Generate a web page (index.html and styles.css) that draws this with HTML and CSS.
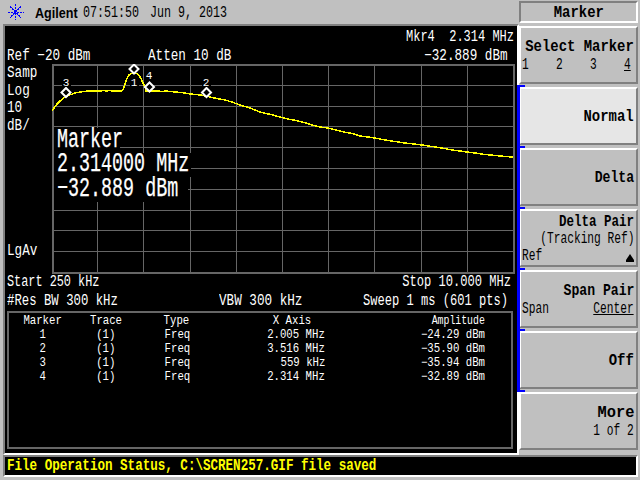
FILE: index.html
```html
<!DOCTYPE html>
<html lang="en">
<head>
<meta charset="utf-8">
<title>Agilent Marker</title>
<link rel="stylesheet" href="styles.css">
</head>
<body>
<div class="app">
  <div class="left">
    <header class="topbar">
      <svg class="logo" viewBox="0 0 24 24" width="24" height="24" aria-hidden="true">
        <g stroke="#0000ff" stroke-width="1" stroke-dasharray="2 1" fill="none" shape-rendering="crispEdges">
          <path d="M11.500 4V20M3.500 12.500H19.500M6 6.500L17 17.500M17 6.500L6 17.500"/>
        </g>
      </svg>
      <span class="brand"><span class="tx brandtx">Agilent</span></span>
      <span class="tx hdr clock">07:51:50</span>
      <span class="tx hdr date">Jun 9, 2013</span>
    </header>
    <main class="screen">
      <div class="row r1"><span class="tx m mkr tr">Mkr4  2.314 MHz</span></div>
      <div class="row r2">
        <span class="cell-ref"><span class="tx m">Ref −20 dBm</span></span>
        <span class="cell-atten"><span class="tx m">Atten 10 dB</span></span>
        <span class="cell-amp"><span class="tx m tr">−32.889 dBm</span></span>
      </div>
      <div class="plotrow">
        <div class="side">
          <div class="side-top">
            <div class="tx m">Samp</div>
            <div class="tx m">Log</div>
            <div class="tx m">10</div>
            <div class="tx m">dB/</div>
          </div>
          <div class="tx m lgav">LgAv</div>
        </div>
        <div class="plot">
          <svg class="graph" viewBox="52 64 464 210" width="464" height="210" aria-hidden="true">
            <g stroke="#666" stroke-width="1" fill="none" shape-rendering="crispEdges">
              <path d="M97.500 65V272M143.500 65V272M190.500 65V272M236.500 65V272M282.500 65V272M328.500 65V272M374.500 65V272M421.500 65V272M467.500 65V272"/>
              <path d="M53 85.500H513M53 106.500H513M53 126.500H513M53 147.500H513M53 168.500H513M53 189.500H513M53 210.500H513M53 230.500H513M53 251.500H513"/>
              <path stroke-width="2" d="M53 65V273H514V65H52"/>
            </g>
            <polyline class="trace" fill="none" stroke="#ffff00" stroke-width="1.500" points="52,111 54,108 57,104 60,101 63,98.500 67,96 71,94.500 75,93 80,92 85,91.300 92,91 100,91 104,90.400 106,91 110,90.600 113,91 121,91 123,89.500 125,84 127,78.500 129,75 131,73.500 134,72.500 137,73.500 139,75.500 141,78.500 143,83 145,87 146,91 152,91 158,91 162,91.500 166,91 170,91.500 175,92 180,92.500 185,93 190,94 196,94.600 200,95 206,96 212,97.500 218,98.700 225,100 232,102 240,105 250,108 260,112 266,113.500 272,114.800 280,117 288,119 296,120.500 304,122.500 312,125 320,127 328,128 336,130 344,132 352,133.500 360,136 368,137 375,138 385,140 395,141.500 405,143 414,144 422,145 432,146.500 442,148 452,150 460,151 467,152 475,153 485,154.500 495,155.500 505,156.500 513,157"/>
            <g fill="#000" stroke="#fff" stroke-width="2">
              <path d="M66 88L70.500 92.500L66 97L61.500 92.500Z"/>
              <path d="M134 64.500L138.500 69L134 73.500L129.500 69Z"/>
              <path d="M149.500 82.500L154 87L149.500 91.500L145 87Z"/>
              <path d="M206.500 88L211 92.500L206.500 97L202 92.500Z"/>
            </g>
            <g class="mk">
              <rect x="62" y="77" width="9" height="10"/><text x="66" y="86">3</text>
              <rect x="130" y="77" width="9" height="10"/><text x="134" y="86">1</text>
              <rect x="145" y="71" width="9" height="10"/><text x="149" y="79">4</text>
              <rect x="202" y="77" width="9" height="10"/><text x="206" y="86">2</text>
            </g>
          </svg>
          <div class="readout">
            <div class="ro-line ro1"><span class="tx big">Marker</span></div>
            <div class="ro-line ro2"><span class="tx big">2.314000 MHz</span></div>
            <div class="ro-line ro3"><span class="tx big">−32.889 dBm</span></div>
          </div>
        </div>
      </div>
      <div class="row r3">
        <span class="tx m start">Start 250 kHz</span>
        <span class="tx m stop tr">Stop 10.000 MHz</span>
      </div>
      <div class="row r4">
        <span class="cell-res"><span class="tx m res">#Res BW 300 kHz</span></span>
        <span class="cell-vbw"><span class="tx m">VBW 300 kHz</span></span>
        <span class="cell-sweep"><span class="tx m stop tr">Sweep 1 ms (601 pts)</span></span>
      </div>
      <section class="table">
        <div class="c1"><span class="tx s c">Marker</span></div><div class="c2"><span class="tx s c">Trace</span></div><div class="c3"><span class="tx s c">Type</span></div><div class="c4 hx"><span class="tx s tr">X Axis</span></div><div class="c5"><span class="tx s amp tr">Amplitude</span></div>
        <div class="c1"><span class="tx s c">1</span></div><div class="c2"><span class="tx s c">(1)</span></div><div class="c3 fr"><span class="tx s c">Freq</span></div><div class="c4"><span class="tx s tr">2.005 MHz</span></div><div class="c5"><span class="tx s tr">−24.29 dBm</span></div>
        <div class="c1"><span class="tx s c">2</span></div><div class="c2"><span class="tx s c">(1)</span></div><div class="c3 fr"><span class="tx s c">Freq</span></div><div class="c4"><span class="tx s tr">3.516 MHz</span></div><div class="c5"><span class="tx s tr">−35.90 dBm</span></div>
        <div class="c1"><span class="tx s c">3</span></div><div class="c2"><span class="tx s c">(1)</span></div><div class="c3 fr"><span class="tx s c">Freq</span></div><div class="c4"><span class="tx s tr">559 kHz</span></div><div class="c5"><span class="tx s tr">−35.94 dBm</span></div>
        <div class="c1"><span class="tx s c">4</span></div><div class="c2"><span class="tx s c">(1)</span></div><div class="c3 fr"><span class="tx s c">Freq</span></div><div class="c4"><span class="tx s tr">2.314 MHz</span></div><div class="c5"><span class="tx s tr">−32.89 dBm</span></div>
      </section>
    </main>
  </div>
  <aside class="keys">
    <div class="title"><span class="tx kb c">Marker</span></div>
    <div class="key">
      <div class="kl"><span class="tx kb tr">Select Marker</span></div>
      <div class="kl nums"><span class="tx kr">1</span><span class="tx kr">2</span><span class="tx kr">3</span><span class="tx kr u">4</span></div>
    </div>
    <div class="key grp on"><div class="kl"><span class="tx kb tr">Normal</span></div></div>
    <div class="key grp"><div class="kl"><span class="tx kb narrow tr">Delta</span></div></div>
    <div class="key grp">
      <div class="kl"><span class="tx kb pair tr">Delta Pair</span></div>
      <div class="kl"><span class="tx kr tr">(Tracking Ref)</span></div>
      <div class="kl split"><span class="tx kr">Ref</span><span class="tri"></span></div>
    </div>
    <div class="key grp">
      <div class="kl"><span class="tx kb narrow tr">Span Pair</span></div>
      <div class="kl split"><span class="tx kr">Span</span><span class="tx kr u tr">Center</span></div>
    </div>
    <div class="key grp"><div class="kl"><span class="tx kb tr">Off</span></div></div>
    <div class="key grpend">
      <div class="kl"><span class="tx kb wide tr">More</span></div>
      <div class="kl"><span class="tx kr tr">1 of 2</span></div>
    </div>
  </aside>
  <footer class="status"><span class="tx st">File Operation Status, C:\SCREN257.GIF file saved</span></footer>
</div>
</body>
</html>
```

FILE: styles.css
```css
* { box-sizing: border-box; }
html, body { margin: 0; padding: 0; }
body {
  width: 640px;
  height: 480px;
  overflow: hidden;
  background: #c0c0c0;
  font-family: "Liberation Mono", monospace;
  color: #fff;
}
.app {
  width: 640px;
  height: 480px;
  display: grid;
  grid-template-columns: 519px 119px;
  grid-template-rows: 455px 22px;
  overflow: hidden;
}
.left { display: flex; flex-direction: column; padding-left: 3px; }

/* Scaled text helper */
.tx {
  display: inline-block;
  white-space: pre;
  transform-origin: left center;
  line-height: 1;
}
.tx.tr { transform-origin: right center; }
.tx.c { transform-origin: center center; }
.m { font-size: 16px; transform: scaleX(.79); }
.mkr { transform: scaleX(.75); }
.start { transform: scaleX(.74); }
.stop { transform: scaleX(.755); }
.res { transform: scaleX(.77); }
.s { font-size: 12px; transform: scaleX(.89); }
.amp { transform: scaleX(.82); }
.tx.big { font-size: 27px; line-height: 25px; transform: scaleX(.68); -webkit-text-stroke: .25px #fff; }
.hdr { font-size: 16px; transform: scaleX(.73); color: #000; }
.kb { font-size: 16px; font-weight: 700; transform: scaleX(.87); color: #000; }
.kb.narrow { transform: scaleX(.82); }
.kb.pair { transform: scaleX(.78); }
.kb.wide { transform: scaleX(.96); }
.kr { font-size: 16px; transform: scaleX(.7); color: #000; }
.st { font-size: 16px; font-weight: 700; transform: scaleX(.785); color: #ffff00; }
.u { text-decoration: underline; }

/* Top bar */
.topbar {
  height: 24px;
  flex: none;
  display: flex;
  align-items: center;
  color: #000;
  margin-left: -3px;
  padding-top: 1px;
}
.logo { flex: none; margin-left: 4px; margin-top: -1px; }
.brand {
  margin-left: 7px;
  width: 48px;
  display: flex;
}
.brandtx {
  font-family: "Liberation Sans", sans-serif;
  font-weight: 700;
  font-size: 15px;
  transform: scaleX(.84);
}
.clock { width: 67px; }

/* Screen */
.screen {
  flex: 1;
  min-height: 0;
  background: #000;
  border-style: solid;
  border-width: 2px;
  border-color: #808080 #fff #fff #808080;
  display: flex;
  flex-direction: column;
  padding: 0 0 0 2px;
  overflow: hidden;
}
.row { display: flex; flex: none; align-items: center; height: 19px; padding-right: 3px; }
.r1 { justify-content: flex-end; margin-top: 1px; }
.cell-ref { width: 141px; }
.cell-atten { flex: 1; }
.cell-amp { padding-right: 6px; }

.plotrow { display: flex; height: 210px; flex: none; margin-top: -1px; }
.side {
  width: 45px;
  flex: none;
  display: flex;
  flex-direction: column;
  justify-content: space-between;
  padding: 0 0 15px 0;
}
.side-top { display: flex; flex-direction: column; gap: 1.500px; padding-top: 1px; }
.plot { position: relative; width: 464px; height: 210px; }
.graph { display: block; }
.trace { shape-rendering: crispEdges; }
.mk rect { fill: #000; }
.mk text { fill: #fff; font-family: "Liberation Mono", monospace; font-size: 11px; text-anchor: middle; }

.readout {
  position: absolute;
  left: 2px;
  top: 64px;
  display: flex;
  flex-direction: column;
}
.ro-line { background: #000; height: 24.500px; display: flex; align-items: center; padding-left: 3px; }
.ro1 { width: 66px; }
.ro2 { width: 137px; }
.ro3 { width: 134px; }

.r3 { justify-content: space-between; margin-top: -1px; padding-right: 6px; height: 18px; }
.r4 { height: 19px; }
.cell-res { width: 212px; flex: none; }
.cell-vbw { width: 140px; flex: none; }
.cell-sweep { width: 149px; flex: none; display: flex; justify-content: flex-end; }

/* Table */
.table {
  margin-top: 1px;
  width: 506px;
  height: 138px;
  flex: none;
  border: 2px solid #666;
  display: grid;
  grid-template-columns: 68px 58px 82px 108px 160px;
  grid-auto-rows: 14px;
  padding-top: 1px;
  align-content: start;
}
.table > div { display: flex; align-items: center; }
.c1, .c2, .c3 { justify-content: center; }
.c4, .c5 { justify-content: flex-end; }
.hx { padding-right: 14px; }
.fr { padding-left: 3px; }

/* Softkeys */
.keys {
  display: flex;
  flex-direction: column;
  gap: 3px;
  padding-top: 1px;
  grid-row: 1;
  grid-column: 2;
}
.title {
  height: 22px;
  flex: none;
  border-style: solid;
  border-width: 2px;
  border-color: #808080 #fff #fff #808080;
  display: flex;
  align-items: center;
  justify-content: center;
  padding-top: 1px;
}
.key {
  position: relative;
  height: 58px;
  flex: none;
  background: #c0c0c0;
  border-style: solid;
  border-width: 2px;
  border-color: #fff #808080 #808080 #fff;
  display: flex;
  flex-direction: column;
  justify-content: center;
  padding: 2px 2px 0 1px;
}
.key.on { background: #e6e6e6; }
.kl { height: 18px; display: flex; justify-content: flex-end; align-items: center; }
.nums { justify-content: space-between; }
.split { justify-content: space-between; }
.tri {
  width: 8px;
  height: 8px;
  border-bottom: 2px solid #000;
  position: relative;
  margin-top: 4px;
}
.tri::before {
  content: "";
  position: absolute;
  left: 0;
  top: 0;
  border-left: 4px solid transparent;
  border-right: 4px solid transparent;
  border-bottom: 6px solid #000;
}
.grp::before, .grpend::before {
  content: "";
  position: absolute;
  left: -4px;
  top: -4px;
  width: 8px;
  height: 2px;
  background: #0000ff;
}
.grp::after {
  content: "";
  position: absolute;
  left: -4px;
  top: -4px;
  width: 3px;
  height: 61px;
  background: #0000ff;
}

/* Status line */
.status {
  grid-column: 1 / 3;
  grid-row: 2;
  margin-left: 3px;
  width: 635px;
  background: #000;
  border-style: solid;
  border-width: 2px;
  border-color: #808080 #fff #fff #808080;
  display: flex;
  align-items: center;
  padding-left: 2px;
}
```
